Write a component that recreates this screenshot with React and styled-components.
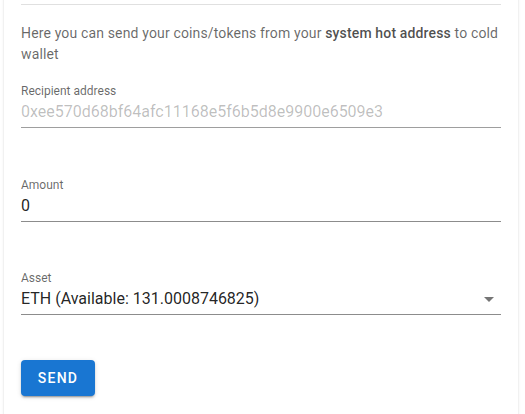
import React from 'react';
import styled, { createGlobalStyle } from 'styled-components';

const GlobalStyle = createGlobalStyle`
  html, body {
    margin: 0;
    padding: 0;
    background: #fff;
    font-family: Roboto, "Liberation Sans", Arial, sans-serif;
    overflow: hidden;
  }
`;

const Page = styled.div`
  width: 525px;
  height: 414px;
  overflow: hidden;
  padding: 0 7px 0 4px;
  box-sizing: border-box;
`;

const Card = styled.div`
  margin-top: -13px;
  background: #fff;
  border-radius: 4px;
  box-shadow: 0 2px 1px -1px rgba(0, 0, 0, 0.2), 0 1px 1px 0 rgba(0, 0, 0, 0.14),
    0 1px 3px 0 rgba(0, 0, 0, 0.12);
  padding: 17px 17px 40px;
  display: flex;
  flex-direction: column;
`;

const Divider = styled.hr`
  margin: 0;
  border: 0;
  border-top: 1px solid #e0e0e0;
`;

const Intro = styled.p`
  margin: 18px 0 0;
  font-size: 14px;
  line-height: 21px;
  letter-spacing: 0.15px;
  color: rgba(0, 0, 0, 0.6);

  b {
    font-weight: 500;
    color: rgba(0, 0, 0, 0.7);
  }
`;

const Field = styled.div`
  display: flex;
  flex-direction: column;
  margin-top: ${({ $gap }) => $gap}px;
  border-bottom: 1px solid ${({ $disabled }) => ($disabled ? '#9e9e9e' : '#8c8c8c')};
`;

const Label = styled.label`
  font-size: 12px;
  line-height: 14px;
  color: rgba(0, 0, 0, 0.6);
`;

const Value = styled.div`
  display: flex;
  align-items: center;
  justify-content: space-between;
  padding: 4px 0 5px;
  font-size: 16px;
  line-height: 20px;
  color: ${({ $disabled }) => ($disabled ? 'rgba(0, 0, 0, 0.26)' : 'rgba(0, 0, 0, 0.87)')};
`;

const Caret = styled.svg`
  width: 24px;
  height: 24px;
  margin: -2px 0;
  fill: rgba(0, 0, 0, 0.54);
`;

const SendButton = styled.button`
  align-self: flex-start;
  margin-top: 45px;
  width: 74px;
  height: 36px;
  border: 0;
  border-radius: 4px;
  background: #1976d2;
  color: #fff;
  font-family: Roboto, "Liberation Sans", Arial, sans-serif;
  font-size: 14px;
  font-weight: 500;
  letter-spacing: 1.25px;
  text-transform: uppercase;
  box-shadow: 0 3px 1px -2px rgba(0, 0, 0, 0.2), 0 2px 2px 0 rgba(0, 0, 0, 0.14),
    0 1px 5px 0 rgba(0, 0, 0, 0.12);
  cursor: pointer;
`;

const App = () => (
  <>
    <GlobalStyle />
    <Page>
      <Card>
        <Divider />
        <Intro>
          Here you can send your coins/tokens from your <b>system hot address</b> to cold
          wallet
        </Intro>

        <Field $gap={19} $disabled>
          <Label>Recipient address</Label>
          <Value $disabled>0xee570d68bf64afc11168e5f6b5d8e9900e6509e3</Value>
        </Field>

        <Field $gap={50}>
          <Label>Amount</Label>
          <Value>0</Value>
        </Field>

        <Field $gap={49}>
          <Label>Asset</Label>
          <Value>
            ETH (Available: 131.0008746825)
            <Caret viewBox="0 0 24 24">
              <path d="M7 10l5 5 5-5z" />
            </Caret>
          </Value>
        </Field>

        <SendButton>Send</SendButton>
      </Card>
    </Page>
  </>
);

export default App;
